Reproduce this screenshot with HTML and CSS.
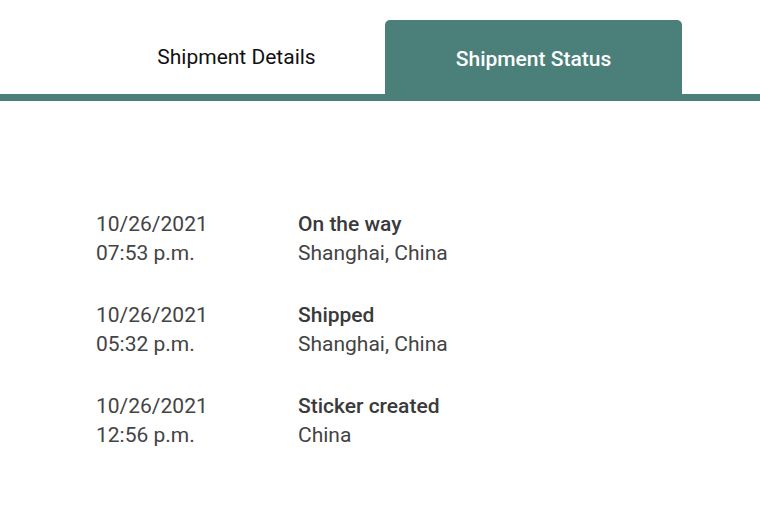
FILE: index.html
```html
<!DOCTYPE html>
<html>
<head>
<meta charset="utf-8">
<link rel="stylesheet" href="styles.css">
</head>
<body>
<div class="tabs">
  <div class="tab">Shipment Details</div>
  <div class="tab active">Shipment Status</div>
</div>
<div class="list">
  <div class="row">
    <div class="when">10/26/2021<br>07:53 p.m.</div>
    <div class="what"><div class="title">On the way</div>Shanghai, China</div>
  </div>
  <div class="row">
    <div class="when">10/26/2021<br>05:32 p.m.</div>
    <div class="what"><div class="title">Shipped</div>Shanghai, China</div>
  </div>
  <div class="row">
    <div class="when">10/26/2021<br>12:56 p.m.</div>
    <div class="what"><div class="title">Sticker created</div>China</div>
  </div>
</div>
</body>
</html>
```
FILE: styles.css
```css
html, body { margin: 0; padding: 0; background: #fff; }
body { font-family: Roboto, "Liberation Sans", sans-serif; width: 760px; height: 512px; overflow: hidden; }
.tabs {
  display: flex;
  padding: 20px 0 0 88px;
  border-bottom: 7px solid #4a8079;
}
.tab {
  width: 297px;
  height: 74px;
  display: flex;
  align-items: center;
  justify-content: center;
  font-size: 21px;
  color: #111;
  padding-bottom: 0;
  box-sizing: border-box;
}
.tab.active {
  background: #4a8079;
  color: #fff;
  font-weight: 500;
  border-radius: 5px 5px 0 0;
  padding-top: 4px;
}
.list { padding: 109px 0 0 96px; display: flex; flex-direction: column; gap: 33px; }
.row { display: flex; font-size: 21px; line-height: 29px; color: #444; }
.when { width: 202px; }
.title { font-weight: 500; color: #3a3a3a; }
```
